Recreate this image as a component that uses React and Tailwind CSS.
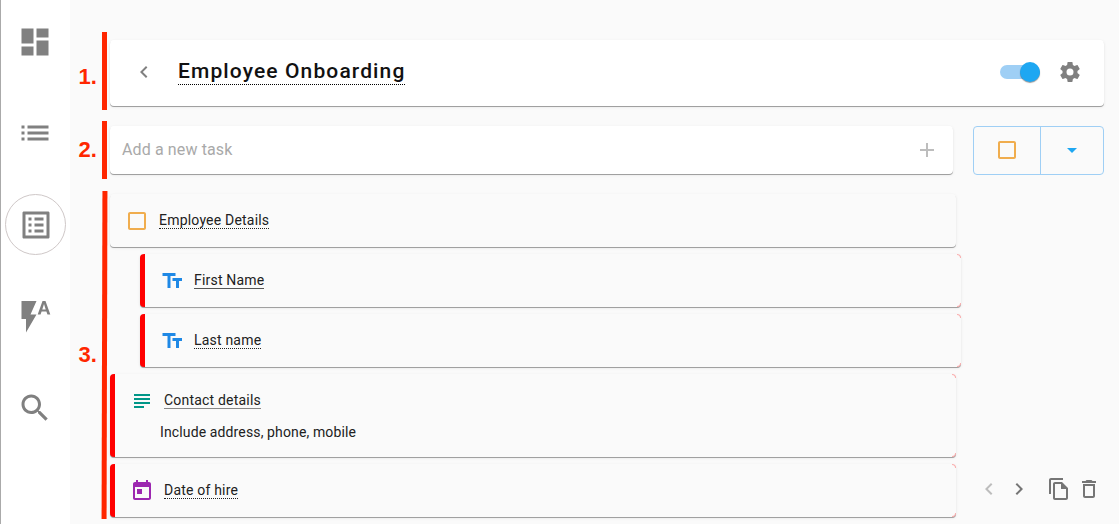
import React from 'react';
import clsx from 'clsx';

const icons = {
  dashboard: 'M13,3V9H21V3M13,21H21V11H13M3,21H11V15H3M3,13H11V3H3V13Z',
  list: 'M3 13h2v-2H3v2zm0 4h2v-2H3v2zm0-8h2V7H3v2zm4 4h14v-2H7v2zm0 4h14v-2H7v2zM7 7v2h14V7H7z',
  listAlt:
    'M19 5v14H5V5h14m1.1-2H3.9c-.5 0-.9.4-.9.9v16.2c0 .4.4.9.9.9h16.2c.4 0 .9-.5.9-.9V3.9c0-.5-.5-.9-.9-.9zM11 7h6v2h-6V7zm0 4h6v2h-6v-2zm0 4h6v2h-6zM7 7h2v2H7zm0 4h2v2H7zm0 4h2v2H7z',
  flashAuto:
    'M16.85,7.65L18,4L19.15,7.65M19,2H17L13.8,11H15.7L16.4,9H19.6L20.3,11H22.2M3,2V14H6V23L13,11H9L13,2H3Z',
  search:
    'M15.5 14h-.79l-.28-.27C15.41 12.59 16 11.11 16 9.5 16 5.91 13.09 3 9.5 3S3 5.91 3 9.5 5.91 16 9.5 16c1.61 0 3.09-.59 4.23-1.57l.27.28v.79l5 4.99L20.49 19l-4.99-5zm-6 0C7.01 14 5 11.99 5 9.5S7.01 5 9.5 5 14 7.01 14 9.5 11.99 14 9.5 14z',
  chevronLeft: 'M15.41 7.41L14 6l-6 6 6 6 1.41-1.41L10.83 12z',
  chevronRight: 'M10 6L8.59 7.41 13.17 12l-4.58 4.59L10 18l6-6z',
  cog: 'M12,15.5A3.5,3.5 0 0,1 8.5,12A3.5,3.5 0 0,1 12,8.5A3.5,3.5 0 0,1 15.5,12A3.5,3.5 0 0,1 12,15.5M19.43,12.97C19.47,12.65 19.5,12.33 19.5,12C19.5,11.67 19.47,11.34 19.43,11L21.54,9.37C21.73,9.22 21.78,8.95 21.66,8.73L19.66,5.27C19.54,5.05 19.27,4.96 19.05,5.05L16.56,6.05C16.04,5.66 15.5,5.32 14.87,5.07L14.5,2.42C14.46,2.18 14.25,2 14,2H10C9.75,2 9.54,2.18 9.5,2.42L9.13,5.07C8.5,5.32 7.96,5.66 7.44,6.05L4.95,5.05C4.73,4.96 4.46,5.05 4.34,5.27L2.34,8.73C2.21,8.95 2.27,9.22 2.46,9.37L4.57,11C4.53,11.34 4.5,11.67 4.5,12C4.5,12.33 4.53,12.65 4.57,12.97L2.46,14.63C2.27,14.78 2.21,15.05 2.34,15.27L4.34,18.73C4.46,18.95 4.73,19.03 4.95,18.95L7.44,17.94C7.96,18.34 8.5,18.68 9.13,18.93L9.5,21.58C9.54,21.82 9.75,22 10,22H14C14.25,22 14.46,21.82 14.5,21.58L14.87,18.93C15.5,18.67 16.04,18.34 16.56,17.94L19.05,18.95C19.27,19.03 19.54,18.95 19.66,18.73L21.66,15.27C21.78,15.05 21.73,14.78 21.54,14.63L19.43,12.97Z',
  plus: 'M19 13h-6v6h-2v-6H5v-2h6V5h2v6h6v2z',
  menuDown: 'M7 10l5 5 5-5z',
  checkbox: 'M19 5v14H5V5h14m0-2H5c-1.1 0-2 .9-2 2v14c0 1.1.9 2 2 2h14c1.1 0 2-.9 2-2V5c0-1.1-.9-2-2-2z',
  textSize: 'M2.5,4V7H7.5V19H10.5V7H15.5V4H2.5M22,9H12.5V12H16V19H19V12H22V9Z',
  subject: 'M14 17H4v2h10v-2zm6-8H4v2h16V9zM4 15h16v-2H4v2zM4 5v2h16V5H4z',
  calendar:
    'M19 3h-1V1h-2v2H8V1H6v2H5c-1.11 0-1.99.9-1.99 2L3 19c0 1.1.89 2 2 2h14c1.1 0 2-.9 2-2V5c0-1.1-.9-2-2-2zm0 16H5V8h14v11zM7 10h5v5H7z',
  copy: 'M16 1H4c-1.1 0-2 .9-2 2v14h2V3h12V1zm-1 4H8c-1.1 0-1.99.9-1.99 2L6 21c0 1.1.89 2 1.99 2H19c1.1 0 2-.9 2-2V11l-6-6zM8 21V7h6v5h5v9H8z',
  trash: 'M6 19c0 1.1.9 2 2 2h8c1.1 0 2-.9 2-2V7H6v12zM8 9h8v10H8V9zm7.5-5l-1-1h-5l-1 1H5v2h14V4z',
};

function Icon({ name, className = 'size-6' }) {
  return (
    <svg viewBox="0 0 24 24" fill="currentColor" className={clsx('shrink-0', className)}>
      <path d={icons[name]} />
    </svg>
  );
}

function NavItem({ name, active }) {
  return (
    <button
      className={clsx(
        'flex size-[61px] shrink-0 items-center justify-center rounded-full border text-[#808080]',
        active ? 'border-[#cfc8c8]' : 'border-transparent pr-[2px]'
      )}
    >
      <Icon name={name} className="size-9" />
    </button>
  );
}

const cardShadow = 'shadow-[0_1px_0_#a0a0a0,0_1px_3px_rgba(0,0,0,0.1)]';

function Task({ icon, color, title, note, required, nested, underline = 'border-dotted border-[#222]' }) {
  return (
    <div
      className={clsx(
        'relative rounded-[4px] bg-[#fafafa]',
        cardShadow,
        nested ? 'ml-[30px] w-[821px]' : 'w-[846px]',
        required && 'border-l-[5px] border-[#f00]',
        note ? 'h-[83px]' : 'h-[53px]'
      )}
    >
      <div className="flex h-[53px] items-center pl-[15px]">
        <Icon name={icon} className={clsx('mt-px size-6', color)} />
        <span
          className={clsx(
            'mb-px ml-[10px] h-[18px] border-b text-[14px] leading-[18px] tracking-[0.2px] text-[#212121]',
            underline
          )}
        >
          {title}
        </span>
      </div>
      {note && <p className="-mt-[4px] pl-[45px] text-[14px] leading-[18px] tracking-[0.13px] text-[#212121]">{note}</p>}
      {required && (
        <>
          <i className="absolute top-0 right-0 size-1 rounded-tr-[4px] border-t border-r border-[#ff00004d]" />
          <i className="absolute right-0 bottom-0 size-1 rounded-br-[4px] border-r border-b border-[#ff00004d]" />
        </>
      )}
    </div>
  );
}

function App() {
  return (
    <div className="relative flex h-[524px] w-[1119px] overflow-hidden bg-[#fafafa] font-[Roboto,sans-serif]">
      <nav className="flex w-[70px] shrink-0 flex-col items-start gap-[30.5px] border-l border-[#aaa] bg-white pt-[11px] pl-1">
        <NavItem name="dashboard" />
        <NavItem name="list" />
        <NavItem name="listAlt" active />
        <NavItem name="flashAuto" />
        <NavItem name="search" />
      </nav>

      <main className="flex-1 pt-10 pl-10">
        <header
          className={clsx('flex h-[66px] w-[994px] items-center rounded-[4px] bg-white pb-[2px] pl-[22px] text-[#808080]', cardShadow)}
        >
          <Icon name="chevronLeft" />
          <h1 className="ml-[22px] h-[26px] border-b border-dotted border-black text-[21px] leading-[25px] font-medium tracking-[1.12px] text-[#111]">
            Employee Onboarding
          </h1>
          <div className="mr-[18px] ml-auto flex h-[14px] w-10 items-center justify-end rounded-full bg-[#9fcff5]">
            <div className="size-5 rounded-full bg-[#1ea7f2] shadow-[0_1px_1px_rgba(0,0,0,0.4)]" />
          </div>
          <Icon name="cog" className="mr-[22px] size-6" />
        </header>

        <div className="mt-5 flex gap-5">
          <div className={clsx('flex h-12 w-[843px] items-center justify-between rounded-[4px] bg-white pr-[14px] pl-3', cardShadow)}>
            <span className="text-[16px] tracking-[0.12px] text-[#a9a9a9]">Add a new task</span>
            <Icon name="plus" className="size-6 text-[#bdbdbd]" />
          </div>
          <div className="flex h-[49px] w-[131px] rounded-[4px] border border-[#9fcff5]">
            <button className="flex w-[67px] items-center justify-center border-r border-[#9fcff5] pb-px text-[#f0ad4e]">
              <Icon name="checkbox" />
            </button>
            <button className="flex flex-1 items-center justify-center pb-px text-[#1ea7f2]">
              <Icon name="menuDown" />
            </button>
          </div>
        </div>

        <div className="mt-[19px] flex items-end">
          <div className="flex w-[867px] flex-col gap-[7px]">
            <Task icon="checkbox" color="text-[#f0ad4e]" title="Employee Details" />
            <Task icon="textSize" color="text-[#1e88e5]" title="First Name" required nested underline="border-[#555]" />
            <Task icon="textSize" color="text-[#1e88e5]" title="Last name" required nested />
            <Task
              icon="subject"
              color="text-[#009688]"
              title="Contact details"
              note="Include address, phone, mobile"
              required
              underline="border-[#888]"
            />
            <Task icon="calendar" color="text-[#9c27b0]" title="Date of hire" required />
          </div>
          <div className="mb-[16px] flex text-[#757575]">
            <Icon name="chevronLeft" className="size-6 text-[#bdbdbd]" />
            <Icon name="chevronRight" className="ml-[6px] size-6" />
            <Icon name="copy" className="ml-4 size-6" />
            <Icon name="trash" className="ml-[6px] size-6" />
          </div>
        </div>
      </main>

      {/* numbered callouts laid over the page */}
      <div className="pointer-events-none font-['Liberation_Sans',sans-serif] text-[22px] leading-6 font-bold text-[#ff2600]">
        <span className="absolute top-[65px] left-[78.5px]">1.</span>
        <span className="absolute top-[138px] left-[78.5px]">2.</span>
        <span className="absolute top-[343px] left-[78.5px]">3.</span>
        <div className="absolute top-8 left-[101.5px] h-[78px] w-[5px] bg-[#ff2600]" />
        <div className="absolute top-[121px] left-[101.5px] h-[58px] w-[5px] bg-[#ff2600]" />
        <div className="absolute top-[191px] left-[101.5px] h-[328px] w-[5px] rotate-[0.15deg] bg-[#ff2600]" />
      </div>
    </div>
  );
}

export default App;
